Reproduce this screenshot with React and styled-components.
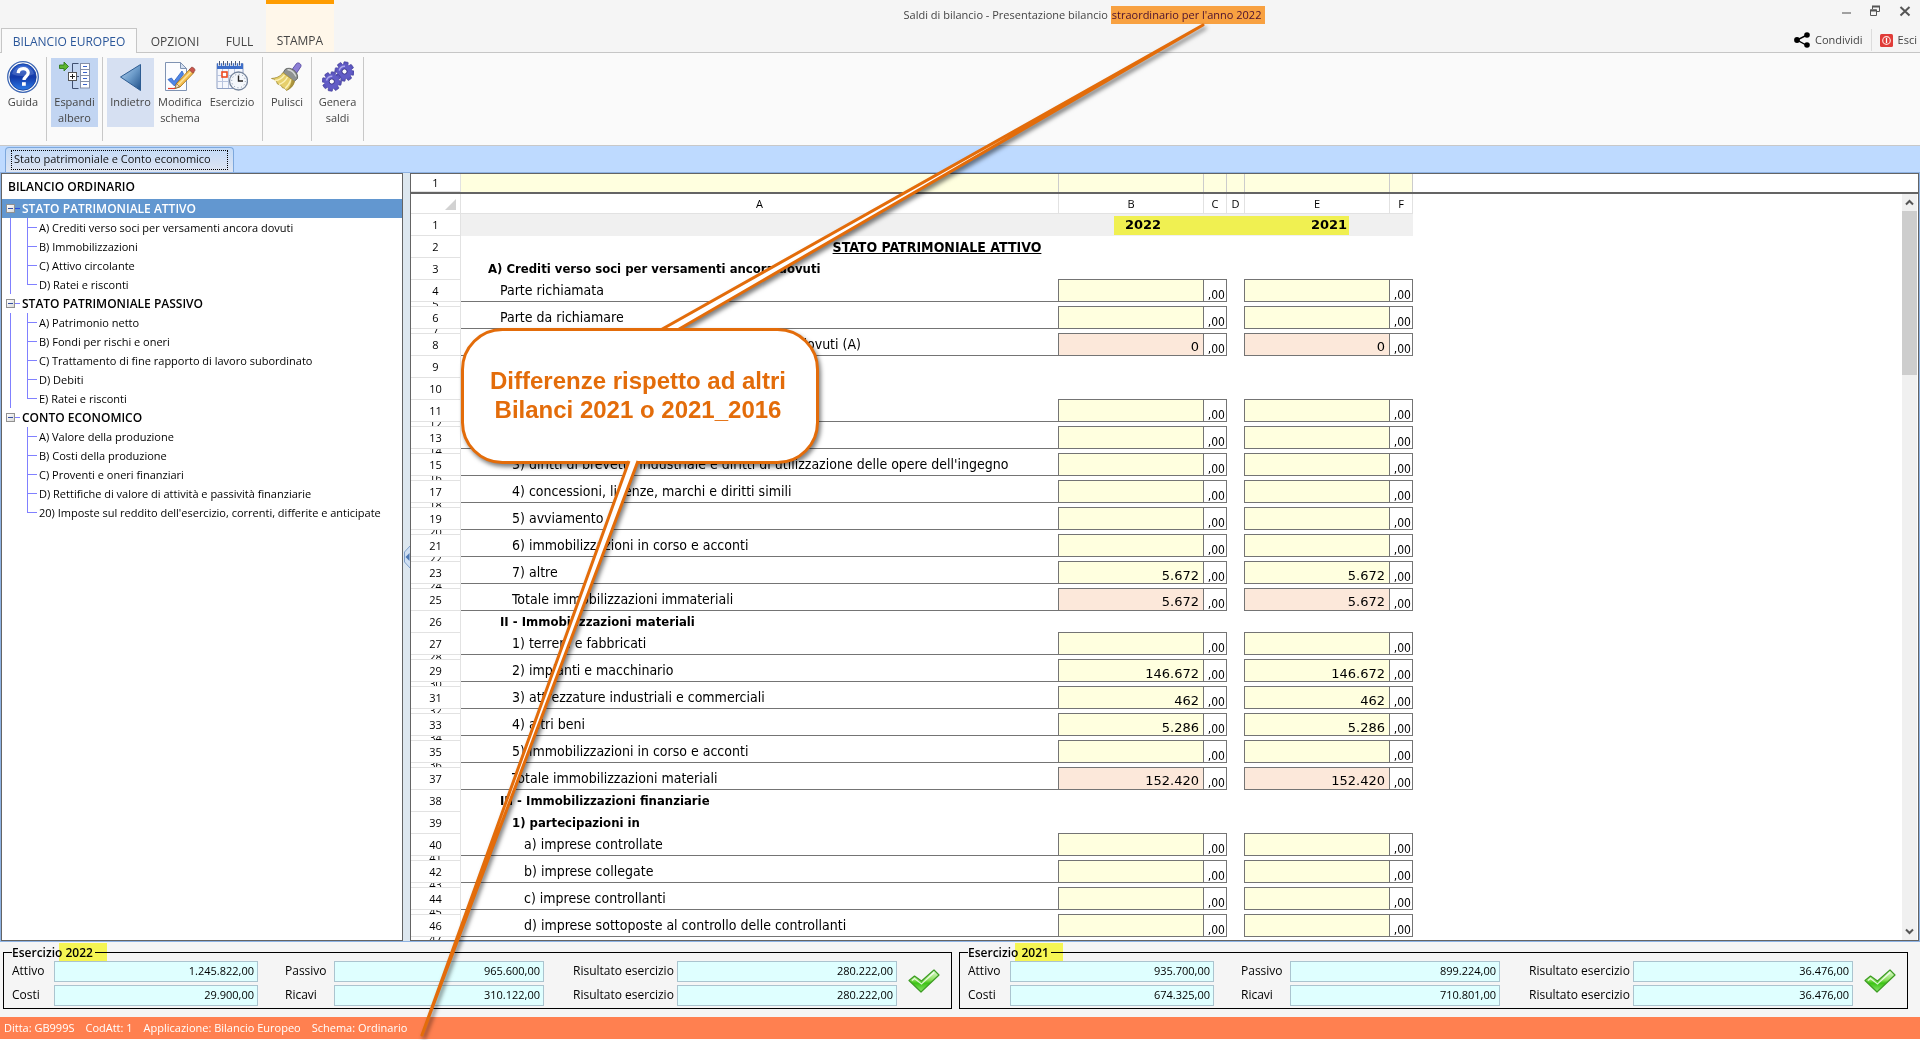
import React from "react";
import styled, { createGlobalStyle, css } from "styled-components";

const ui = '"Open Sans", "Noto Sans", sans-serif';
const sheet = '"DejaVu Sans Condensed", "DejaVu Sans", sans-serif';
const wide = '"DejaVu Sans", sans-serif';

const Global = createGlobalStyle`
  * { box-sizing: border-box; }
  body { margin: 0; background: #fff; font-family: ${ui}; font-size: 11px; line-height: 16px; color: #000; }
  button, input { font: inherit; color: inherit; }
  button { border: 0; background: none; padding: 0; margin: 0; cursor: pointer; }
  ul { list-style: none; margin: 0; padding: 0; }
`;

const Page = styled.div`
  position: relative;
  display: flex;
  flex-direction: column;
  height: 100vh;
  overflow: hidden;
  padding-bottom: 1px;
`;

/* ---------- window header ---------- */
const Header = styled.header`
  display: flex;
  height: 53px;
  flex: none;
  background: #f5f5f5;
  color: #444;
`;
const Tabs = styled.div`
  display: flex;
  align-items: flex-end;
  padding-left: 1px;
  box-shadow: inset 0 -1px #c6c6c6;
`;
const Tab = styled.button`
  font-size: 12px;
  height: 25px;
  width: ${(p) => p.$w}px;
  padding-top: 2px;
  white-space: nowrap;
  ${(p) => p.$active && css`
    background: #fafafa;
    border: 1px solid #c6c6c6;
    border-bottom: 0;
    color: #2b579a;
  `}
  ${(p) => p.$accent && css`
    height: 52px;
    padding-top: 25px;
    margin-bottom: 1px;
    background: #fff7ea;
    border-top: 4px solid #ff9c00;
  `}
`;
const HeaderBody = styled.div`
  flex: 1;
  display: flex;
  flex-direction: column;
  border-bottom: 1px solid #c6c6c6;
`;
const TitleRow = styled.div`
  display: flex;
  height: 28px;
`;
const Title = styled.h1`
  flex: 1;
  margin: 0;
  padding-top: 6px;
  font-size: 11px;
  font-weight: 400;
  line-height: 18px;
  text-align: center;
`;
const TitleMark = styled.mark`
  display: inline-block;
  padding: 0 4px 0 1px;
  background: #f8a141;
  color: #4a1030;
`;
const WindowButtons = styled.div`
  display: flex;
  gap: 18px;
  padding: 5px 9px 0 6px;
  align-items: flex-start;
`;
const IconButton = styled.button`
  display: flex;
`;
const Actions = styled.div`
  display: flex;
  justify-content: flex-end;
  align-items: center;
  height: 24px;
`;
const Action = styled.button`
  display: flex;
  align-items: center;
  gap: 5px;
  height: 22px;
  padding: 0 8px 0 0;
  & + & {
    border-left: 1px solid #dcdcdc;
    padding: 0 3px 0 8px;
  }
`;

/* ---------- ribbon ---------- */
const Ribbon = styled.div`
  display: flex;
  flex: none;
  height: 93px;
  padding-top: 4px;
  background: #fafafa;
  border-bottom: 1px solid #c8c8c8;
`;
const Group = styled.div`
  display: flex;
  height: 84px;
  padding: 1px 4px 0;
  border-right: 1px solid #c8c8c8;
`;
const Tool = styled.button`
  display: flex;
  flex-direction: column;
  align-items: center;
  gap: 1px;
  width: ${(p) => p.$w}px;
  height: 69px;
  padding-top: 3px;
  color: #444;
  background: ${(p) => p.$bg || "transparent"};
`;

/* ---------- document tabs ---------- */
const Strip = styled.div`
  display: flex;
  align-items: flex-end;
  flex: none;
  height: 27px;
  padding-left: 5px;
  background: #bedaff;
  border-bottom: 1px solid #8db2e3;
`;
const DocTab = styled.button`
  height: 25px;
  padding: 2px 5px 3px;
  border: 1px solid #7da8dd;
  border-bottom: 0;
  border-radius: 4px 4px 0 0;
  background: linear-gradient(#c3daf7, #dfe5f1);
  color: #111;
`;
const Focus = styled.span`
  display: block;
  padding: 0 16px 2px 2px;
  border: 1px dotted #000;
`;

/* ---------- work area ---------- */
const Main = styled.main`
  display: flex;
  flex: 1;
  min-height: 0;
  background: #dde7ef;
  border: solid #8db2e3;
  border-width: 0 1px 1px 1px;
`;
const TreePanel = styled.nav`
  width: 402px;
  flex: none;
  background: #fff;
  border: 1px solid #646464;
`;
const TreeTitle = styled.h2`
  margin: 0;
  padding: 0 6px;
  font-size: 12px;
  line-height: 25px;
  font-weight: 600;
`;
const line = "#8080ff";
const Node = styled.div`
  display: flex;
  align-items: center;
  height: 19px;
  padding-left: 4px;
  color: ${(p) => (p.$selected ? "#fff" : "#000")};
  background: ${(p) => (p.$selected ? "#6297d0" : "none")};
`;
const Toggle = styled.button`
  width: 9px;
  height: 9px;
  display: flex;
  align-items: center;
  justify-content: center;
  border: 1px solid #919191;
  background: linear-gradient(135deg, #fff, #d8d8d8);
  &::after {
    content: "";
    width: 5px;
    height: 1px;
    background: #3350a0;
  }
`;
const Dash = styled.span`
  width: 5px;
  height: 1px;
  margin-right: 2px;
  background: ${(p) => (p.$selected ? "#2a4fe0" : line)};
`;
const NodeName = styled.button`
  font-size: ${(p) => (p.$root ? 12 : 11)}px;
  font-weight: ${(p) => (p.$root ? 600 : 400)};
  line-height: 18px;
  white-space: nowrap;
`;
const Children = styled.ul`
  padding-left: 25px;
  background: ${(p) => (p.$last ? "none" : `linear-gradient(${line}, ${line}) 8px 0 / 1px 100% no-repeat`)};
`;
const Leaf = styled.li`
  display: flex;
  align-items: center;
  gap: 2px;
  height: 19px;
  &::before {
    content: "";
    width: 10px;
    height: 19px;
    background:
      linear-gradient(${line}, ${line}) 0 9px / 10px 1px no-repeat,
      linear-gradient(${line}, ${line}) 0 0 / 1px 100% no-repeat;
  }
  &:last-child::before {
    background:
      linear-gradient(${line}, ${line}) 0 9px / 10px 1px no-repeat,
      linear-gradient(${line}, ${line}) 0 0 / 1px 10px no-repeat;
  }
`;
const Splitter = styled.div`
  width: 7px;
  flex: none;
  display: flex;
  align-items: center;
`;

/* ---------- spreadsheet ---------- */
const SheetPanel = styled.section`
  display: flex;
  flex-direction: column;
  flex: 1;
  min-width: 0;
  background: #fff;
  border: 1px solid #646464;
`;
const Frozen = styled.div`
  flex: none;
  border-bottom: 2px solid #646464;
`;
const SheetBody = styled.div`
  display: flex;
  flex: 1;
  min-height: 0;
`;
const SheetScroll = styled.div`
  position: relative;
  flex: 1;
  overflow: hidden;
`;
const Table = styled.table`
  table-layout: fixed;
  width: 1002px;
  border-collapse: separate;
  border-spacing: 0;
`;
const RowHead = styled.th`
  height: ${(p) => p.$h}px;
  padding: 0;
  border-right: 1px solid #e2e2e2;
  border-bottom: 1px solid #e2e2e2;
  font-size: 11px;
  font-weight: 400;
  line-height: 14px;
`;
const Clip = styled.div`
  display: flex;
  align-items: center;
  justify-content: center;
  height: 4px;
  overflow: hidden;
  line-height: 14px;
`;
const ColHead = styled.th`
  height: 20px;
  padding: 0;
  border-right: 1px solid #e2e2e2;
  border-bottom: 1px solid #e2e2e2;
  font-size: 11px;
  font-weight: 400;
  line-height: 14px;
`;
const FrozenCell = styled.td`
  height: 18px;
  padding: 0;
  background: #ffffdf;
  border-right: 1px solid #ccc;
`;
const YearCell = styled.td`
  padding: 0;
  background: #f0f0f0;
  font: 700 13px/16px ${wide};
  text-align: center;
`;
const SheetTitle = styled.td`
  padding: 0;
  text-align: center;
  font: 700 14px/18px ${sheet};
  text-decoration: underline;
`;
const LabelCell = styled.td`
  padding: 0 0 ${(p) => (p.$bold ? 0 : 2)}px ${(p) => 27 + p.$level * 12}px;
  white-space: nowrap;
  font: ${(p) => (p.$bold ? "700 13px" : "400 14px")}/18px ${sheet};
  border-bottom: ${(p) => (p.$box ? "1px solid #747474" : 0)};
`;
const Cell = styled.td`
  padding: 0;
  font: 13px/16px ${wide};
  text-align: right;
  ${(p) => p.$box && css`
    background: ${p.$bg};
    border: solid #747474;
    border-width: 0 1px 1px 0;
    box-shadow: -1px -1px #747474, 0 -1px #747474, -1px 0 #747474;
  `}
`;
const Amount = styled.input`
  display: block;
  width: 100%;
  height: 21px;
  padding: 5px 4px 0 0;
  border: 0;
  background: none;
  text-align: right;
`;
const Total = styled.output`
  display: block;
  height: 21px;
  padding: 5px 4px 0 0;
`;
const Cents = styled.div`
  height: 21px;
  padding: 7px 1px 0 0;
  font: 12px/16px ${sheet};
`;
const Marker = styled.span`
  position: absolute;
  left: ${(p) => p.$x}px;
  top: ${(p) => p.$y}px;
  width: ${(p) => p.$w}px;
  height: ${(p) => p.$h}px;
  background: #ffff56;
  mix-blend-mode: multiply;
  pointer-events: none;
`;
const Scrollbar = styled.div`
  display: flex;
  flex-direction: column;
  width: 15px;
  margin-right: 1px;
  flex: none;
  background: #f0f0f0;
`;
const ScrollArrow = styled.button`
  display: flex;
  align-items: center;
  justify-content: center;
  height: 17px;
`;
const Thumb = styled.div`
  height: 164px;
  margin-bottom: auto;
  background: #cdcdcd;
`;

/* ---------- summary ---------- */
const Summary = styled.footer`
  display: flex;
  flex: none;
  gap: 7px;
  padding: 2px 12px 8px 3px;
  background: #f5f5f5;
`;
const Box = styled.fieldset`
  flex: 1;
  min-width: 0;
  margin: 0;
  padding: 0 11px 2px 8px;
  border: 1px solid #000;
`;
const Legend = styled.legend`
  position: relative;
  padding: 0 2px 0 0;
  font-size: 12px;
  font-weight: 600;
  line-height: 17px;
`;
const Fields = styled.div`
  display: grid;
  grid-template-columns: 42px 204fr 76px 210fr 133px 220fr 43px;
  grid-auto-rows: 21px;
  row-gap: 3px;
  align-items: center;
`;
const FieldLabel = styled.label`
  font-size: 12px;
  padding-left: ${(p) => p.$pad}px;
  padding-bottom: 2px;
  white-space: nowrap;
`;
const Field = styled.input`
  width: 100%;
  min-width: 0;
  height: 21px;
  padding: 0 3px 2px;
  border: 1px solid #abc4cf;
  background: #dfffff;
  text-align: right;
`;
const CheckSlot = styled.div`
  grid-column: 7;
  grid-row: 1 / span 2;
  justify-self: end;
  display: flex;
  padding-bottom: 6px;
`;
const Status = styled.div`
  display: flex;
  align-items: center;
  gap: 11px;
  flex: none;
  height: 22px;
  padding-left: 4px;
  background: #ff8050;
  color: #fff;
`;

/* ---------- callout ---------- */
const Callout = styled.aside`
  position: absolute;
  left: 0;
  top: 0;
  pointer-events: none;
`;
const Arrows = styled.svg`
  display: block;
  filter: drop-shadow(2px 3px 2px rgba(0, 0, 0, 0.5));
`;
const CalloutText = styled.p`
  position: absolute;
  left: 460px;
  top: 328px;
  width: 356px;
  height: 134px;
  margin: 0;
  display: flex;
  align-items: center;
  justify-content: center;
  text-align: center;
  font: 700 24px/29px "Liberation Sans", sans-serif;
  color: #e36c0a;
`;

/* ---------- icons ---------- */
const HelpIcon = () => (
  <svg width="32" height="32" viewBox="0 0 32 32">
    <defs>
      <linearGradient id="hg" x1="0" y1="0" x2="0" y2="1">
        <stop offset="0" stopColor="#2a5fd0" /><stop offset=".5" stopColor="#1238a8" /><stop offset="1" stopColor="#2c7be6" />
      </linearGradient>
    </defs>
    <circle cx="16" cy="16" r="15.3" fill="#fff" stroke="#3c66b4" strokeWidth="1.3" />
    <circle cx="16" cy="16" r="13.2" fill="url(#hg)" stroke="#123a94" strokeWidth=".8" />
    <path d="M5 13a11.5 11.5 0 0 1 22 0c-7 3-15 3-22 0z" fill="#fff" opacity=".16" />
    <path d="M11.2 12.2c.2-3 2.200-4.600 5-4.600 2.900 0 5 1.600 5 4.200 0 3.600-4.200 3.700-4.200 7.200" fill="none" stroke="#fff" strokeWidth="3.300" />
    <rect x="15" y="21.200" width="3.800" height="3.600" fill="#fff" />
  </svg>
);
const ExpandIcon = () => (
  <svg width="32" height="32" viewBox="0 0 32 32">
    <path d="M0.500 4h4.500V1l4.500 4.500-4.500 4.500V7.500H0.500z" fill="#5cb531" stroke="#2f7a1c" strokeWidth=".9" />
    <path d="M19.500 2.500h-6v9M13.500 19.500v8h6M18 15.500h2" fill="none" stroke="#3f4f70" />
    <rect x="9.500" y="11.500" width="8" height="8" fill="#fff" stroke="#555" />
    <path d="M11 15.500h5M13.500 13v5" stroke="#222" />
    {[2, 8, 14, 20].map((y) => (
      <g key={y}>
        <rect x="21.500" y={y + 0.5} width="9" height="6.500" fill="#fdfdff" stroke="#8690a8" />
        <path d={`M24 ${y + 3.5}h4`} stroke="#3b62c8" />
      </g>
    ))}
  </svg>
);
const BackIcon = () => (
  <svg width="32" height="32" viewBox="0 0 32 32">
    <defs>
      <linearGradient id="bg" x1="0" y1="0" x2="1" y2="1">
        <stop offset="0" stopColor="#b9d4ef" /><stop offset=".5" stopColor="#6d9cca" /><stop offset="1" stopColor="#1f4f88" />
      </linearGradient>
    </defs>
    <path d="M5.500 16L25.500 3.500v26z" fill="url(#bg)" stroke="#2d5c92" />
  </svg>
);
const EditIcon = () => (
  <svg width="32" height="32" viewBox="0 0 32 32">
    <path d="M1.500 1.500h15l6 6v22h-21z" fill="#fbfcff" stroke="#7f93b3" />
    <path d="M16.500 1.500v6h6z" fill="#d5e0f0" stroke="#7f93b3" />
    <path d="M4 18.500l3.500-1.500 2.500 3.500L18 10l1.500 3L10.500 25z" fill="#4f86e6" stroke="#2c5fc0" strokeWidth=".8" />
    <path d="M11 27.500l1.500-5L26 8l4 3.500L16 26z" fill="#f5bf4e" stroke="#a8741c" strokeWidth=".9" />
    <path d="M14 24L28 9.500" stroke="#fbe3a0" strokeWidth="1.400" />
    <path d="M25.200 8.800l2-2.300c1.300-1 4.500 1.500 3.600 3.300l-2 2.300z" fill="#c9564c" stroke="#8a3a34" strokeWidth=".7" />
    <path d="M11 27.500l1.500-5 3 3z" fill="#f2dcc0" stroke="#6b5430" strokeWidth=".6" />
    <path d="M4 27.500h7" stroke="#e33a2a" strokeWidth="1.200" />
  </svg>
);
const CalendarIcon = () => (
  <svg width="32" height="32" viewBox="0 0 32 32">
    <path d="M1 2.500h26v25H1z" fill="#f5f7fd" stroke="#8fa0c4" />
    <path d="M1 2.500h26V8H1z" fill="#3d6ec9" />
    <path d="M3.500 0v5M7.500 0v5M11.500 0v5M15.500 0v5M19.500 0v5M23.500 0v5" stroke="#fff" strokeWidth="2.500" />
    <path d="M3.500 0v4.500M7.500 0v4.500M11.500 0v4.500M15.500 0v4.500M19.500 0v4.500M23.500 0v4.500" stroke="#4a5876" />
    <path d="M1 14.500h26M1 20.500h26M6.500 8v19M12.500 8v19M18.500 8v19" stroke="#b9c5df" />
    <rect x="6" y="11" width="5" height="5" fill="#fff" stroke="#ee4a22" strokeWidth="1.600" />
    <circle cx="22.500" cy="20" r="9" fill="#f4f7fb" stroke="#76859c" strokeWidth="1.300" />
    <circle cx="22.500" cy="20" r="6.800" fill="none" stroke="#8190a8" strokeDasharray="1 2.560" />
    <path d="M22.500 14.500V20h4.500" fill="none" stroke="#222" strokeWidth="1.400" />
  </svg>
);
const BroomIcon = () => (
  <svg width="32" height="32" viewBox="0 0 32 32">
    <path d="M20 10l5.500-7.500c1.800-1.600 5.500 .6 4.300 3.200L25 13z" fill="#8d7fd6" stroke="#574aa0" strokeWidth=".9" />
    <path d="M14 8.500c5-4 14 2.500 12.500 9l-4.500 4L11.500 13z" fill="#8e9190" stroke="#5c605f" strokeWidth=".9" />
    <path d="M16.500 8.500c3.500 .5 7 3.500 8.500 7" fill="none" stroke="#d5d8d6" strokeWidth="1.300" />
    <path d="M12 11.500l11.500 9c-1 4.500-4 7-8 9-.8-2-2.500-2.500-4-2.700-1-2.500-3-3.300-5-3.800-1-3.500-3-5-6-5.500C5 17 9 16 12 11.500z" fill="#e6cf6c" stroke="#a08a34" strokeWidth=".8" />
    <path d="M13.500 14C11 17.500 7 19.500 3.500 19.500M16.500 16c-2 4-5.500 6.500-8.500 7.500M20 18.500c-1.500 4-3.500 7-6 9" fill="none" stroke="#fbf1b6" strokeWidth="1.400" />
    <path d="M15.500 29.500c4-2 7-4.500 8-9l-3-2c0 4.500-2 8-5 11z" fill="#8c7428" opacity=".65" />
  </svg>
);
const Gear = ({ x, y, r }) => (
  <g transform={`translate(${x} ${y})`}>
    {[0, 45, 90, 135, 180, 225, 270, 315].map((a) => (
      <rect key={a} x="-2.200" y={-r - 2.800} width="4.400" height="5" rx=".6" fill="#5b55bd" stroke="#3f3a94" strokeWidth=".6" transform={`rotate(${a + 10})`} />
    ))}
    <circle r={r - 1.800} fill="none" stroke="#625cc6" strokeWidth="5.200" />
    <circle r={r - 4.200} fill="none" stroke="#3a3588" strokeWidth=".9" />
    <path d={`M${-r + 1.5} -1a${r - 1} ${r - 1} 0 0 1 ${r - 1} ${-r + 2.5}`} fill="none" stroke="#aeaaee" strokeWidth="1.500" />
  </g>
);
const GearsIcon = () => (
  <svg width="32" height="32" viewBox="0 0 32 32">
    <Gear x={22.5} y={10.5} r={6.8} />
    <Gear x={9.8} y={20.5} r={6.8} />
  </svg>
);
const CheckIcon = () => (
  <svg width="32" height="24" viewBox="0 0 32 24">
    <defs>
      <linearGradient id="cg" x1="0" y1="0" x2="0" y2="1">
        <stop offset="0" stopColor="#e9fbdf" /><stop offset=".45" stopColor="#8be05c" /><stop offset=".6" stopColor="#3cc414" /><stop offset="1" stopColor="#8fe670" />
      </linearGradient>
    </defs>
    <path d="M1 11.500L6.500 7l7 5L26 1l5 5L13 23z" fill="url(#cg)" stroke="#3d9c24" strokeWidth="1.200" strokeLinejoin="round" />
    <path d="M4 11.500l2.500-2 7 5.500L26 3.500" fill="none" stroke="#fff" strokeWidth="1.200" opacity=".8" />
  </svg>
);
const MinimizeIcon = () => (
  <svg width="10" height="12"><path d="M1 8h9" stroke="#a0a0a0" strokeWidth="2" /></svg>
);
const RestoreIcon = () => (
  <svg width="12" height="12">
    <path d="M3.500 4V1.500h7v5H8" fill="none" stroke="#555" />
    <path d="M3 1.500h8M1 5.500h7" stroke="#555" strokeWidth="2" />
    <path d="M1.500 5h6v5.500h-6z" fill="none" stroke="#555" />
  </svg>
);
const CloseIcon = () => (
  <svg width="12" height="12"><path d="M1.500 2l9 8.500M10.500 2l-9 8.500" stroke="#555" strokeWidth="2" /></svg>
);
const ShareIcon = () => (
  <svg width="16" height="16">
    <path d="M13 3L3 8l10 5.500" fill="none" stroke="#000" strokeWidth="1.400" />
    <circle cx="13" cy="3" r="2.800" /><circle cx="3" cy="8" r="2.900" /><circle cx="13" cy="13" r="2.800" />
  </svg>
);
const ExitIcon = () => (
  <svg width="13" height="13">
    <rect width="13" height="13" rx="1.500" fill="#e03c38" />
    <circle cx="6.500" cy="6.500" r="3.800" fill="none" stroke="#ffe0dc" strokeWidth="1.200" />
    <path d="M6.500 4v5" stroke="#fff" strokeWidth="1.300" />
  </svg>
);
const CornerIcon = () => (
  <svg width="49" height="19" display="block"><path d="M45 5v11H34z" fill="#d2d2d2" /></svg>
);
const CollapseIcon = () => (
  <svg width="7" height="24">
    <path d="M7 1L1.500 7v10L7 23" fill="#cfdff2" stroke="#7f9fca" />
    <path d="M6.500 8v8L2.500 12z" fill="#4d78b4" />
  </svg>
);
const ArrowUp = () => (
  <svg width="9" height="7"><path d="M1 5.500l3.500-3.500L8 5.500" fill="none" stroke="#555" strokeWidth="2" /></svg>
);
const ArrowDown = () => (
  <svg width="9" height="7"><path d="M1 1.500L4.500 5 8 1.500" fill="none" stroke="#555" strokeWidth="2" /></svg>
);

/* ---------- data ---------- */
const tree = [
  { name: "STATO PATRIMONIALE ATTIVO", selected: true, items: ["A) Crediti verso soci per versamenti ancora dovuti", "B) Immobilizzazioni", "C) Attivo circolante", "D) Ratei e risconti"] },
  { name: "STATO PATRIMONIALE PASSIVO", items: ["A) Patrimonio netto", "B) Fondi per rischi e oneri", "C) Trattamento di fine rapporto di lavoro subordinato", "D) Debiti", "E) Ratei e risconti"] },
  { name: "CONTO ECONOMICO", items: ["A) Valore della produzione", "B) Costi della produzione", "C) Proventi e oneri finanziari", "D) Rettifiche di valore di attività e passività finanziarie", "20) Imposte sul reddito dell'esercizio, correnti, differite e anticipate"] },
];

const head = (n, label, level) => ({ n, kind: "head", label, level });
const val = (n, label, level, value = "") => ({ n, kind: "value", label, level, value });
const tot = (n, label, level, value) => ({ n, kind: "total", label, level, value });
const gap = (n) => ({ n, kind: "gap" });

const rows = [
  head(3, "A) Crediti verso soci per versamenti ancora dovuti", 0),
  val(4, "Parte richiamata", 1), gap(5),
  val(6, "Parte da richiamare", 1), gap(7),
  tot(8, "Totale crediti verso soci per versamenti ancora dovuti (A)", 1, "0"),
  head(9, "", 0),
  head(10, "", 1),
  val(11, "", 2), gap(12),
  val(13, "", 2), gap(14),
  val(15, "3) diritti di brevetto industriale e diritti di utilizzazione delle opere dell'ingegno", 2), gap(16),
  val(17, "4) concessioni, licenze, marchi e diritti simili", 2), gap(18),
  val(19, "5) avviamento", 2), gap(20),
  val(21, "6) immobilizzazioni in corso e acconti", 2), gap(22),
  val(23, "7) altre", 2, "5.672"), gap(24),
  tot(25, "Totale immobilizzazioni immateriali", 2, "5.672"),
  head(26, "II - Immobilizzazioni materiali", 1),
  val(27, "1) terreni e fabbricati", 2), gap(28),
  val(29, "2) impianti e macchinario", 2, "146.672"), gap(30),
  val(31, "3) attrezzature industriali e commerciali", 2, "462"), gap(32),
  val(33, "4) altri beni", 2, "5.286"), gap(34),
  val(35, "5) immobilizzazioni in corso e acconti", 2), gap(36),
  tot(37, "Totale immobilizzazioni materiali", 2, "152.420"),
  head(38, "III - Immobilizzazioni finanziarie", 1),
  head(39, "1) partecipazioni in", 2),
  val(40, "a) imprese controllate", 3), gap(41),
  val(42, "b) imprese collegate", 3), gap(43),
  val(44, "c) imprese controllanti", 3), gap(45),
  val(46, "d) imprese sottoposte al controllo delle controllanti", 3), gap(47),
];

const years = [
  { year: "2022", rows: [["Attivo", "1.245.822,00", "Passivo", "965.600,00", "280.222,00"], ["Costi", "29.900,00", "Ricavi", "310.122,00", "280.222,00"]] },
  { year: "2021", rows: [["Attivo", "935.700,00", "Passivo", "899.224,00", "36.476,00"], ["Costi", "674.325,00", "Ricavi", "710.801,00", "36.476,00"]] },
];

const fills = { value: "#ffffdf", total: "#fce8da" };

const Cols = () => (
  <colgroup>
    {[50, 598, 145, 23, 18, 145, 23].map((w, i) => <col key={i} width={w} />)}
  </colgroup>
);

function AmountPair({ row, year }) {
  const box = row.kind in fills;
  return (
    <>
      <Cell $box={box} $bg={fills[row.kind]}>
        {row.kind === "value" && <Amount aria-label={`Riga ${row.n}, ${year}`} defaultValue={row.value} />}
        {row.kind === "total" && <Total>{row.value}</Total>}
      </Cell>
      <Cell $box={box} $bg="#fff">{box && <Cents>,00</Cents>}</Cell>
    </>
  );
}

function SheetRow({ row }) {
  const isGap = row.kind === "gap";
  return (
    <tr>
      <RowHead scope="row" $h={isGap ? 5 : 22}>{isGap ? <Clip>{row.n}</Clip> : row.n}</RowHead>
      <LabelCell $box={row.kind in fills} $bold={row.kind === "head"} $level={row.level || 0}>{row.label}</LabelCell>
      <AmountPair row={row} year="2022" />
      <Cell />
      <AmountPair row={row} year="2021" />
    </tr>
  );
}

export default function App() {
  return (
    <Page>
      <Global />
      <Header>
        <Tabs role="tablist">
          <Tab role="tab" aria-selected="true" $w={136} $active>BILANCIO EUROPEO</Tab>
          <Tab role="tab" $w={76}>OPZIONI</Tab>
          <Tab role="tab" $w={53}>FULL</Tab>
          <Tab role="tab" $w={68} $accent>STAMPA</Tab>
        </Tabs>
        <HeaderBody>
          <TitleRow>
            <Title>Saldi di bilancio - Presentazione bilancio <TitleMark>straordinario per l'anno 2022</TitleMark></Title>
            <WindowButtons>
              <IconButton aria-label="Riduci a icona"><MinimizeIcon /></IconButton>
              <IconButton aria-label="Ripristina"><RestoreIcon /></IconButton>
              <IconButton aria-label="Chiudi"><CloseIcon /></IconButton>
            </WindowButtons>
          </TitleRow>
          <Actions>
            <Action><ShareIcon />Condividi</Action>
            <Action><ExitIcon />Esci</Action>
          </Actions>
        </HeaderBody>
      </Header>

      <Ribbon>
        <Group><Tool $w={38}><HelpIcon />Guida</Tool></Group>
        <Group><Tool $w={47} $bg="#c2d5f2"><ExpandIcon />Espandi albero</Tool></Group>
        <Group>
          <Tool $w={47} $bg="#d6e0f2"><BackIcon />Indietro</Tool>
          <Tool $w={52}><EditIcon />Modifica schema</Tool>
          <Tool $w={52}><CalendarIcon />Esercizio</Tool>
        </Group>
        <Group><Tool $w={40}><BroomIcon />Pulisci</Tool></Group>
        <Group><Tool $w={43}><GearsIcon />Genera saldi</Tool></Group>
      </Ribbon>

      <Strip role="tablist">
        <DocTab role="tab" aria-selected="true"><Focus>Stato patrimoniale e Conto economico</Focus></DocTab>
      </Strip>

      <Main>
        <TreePanel>
          <TreeTitle>BILANCIO ORDINARIO</TreeTitle>
          <ul>
            {tree.map((g, i) => (
              <li key={g.name}>
                <Node $selected={g.selected}>
                  <Toggle aria-label={`Comprimi ${g.name}`} />
                  <Dash $selected={g.selected} />
                  <NodeName $root>{g.name}</NodeName>
                </Node>
                <Children $last={i === tree.length - 1}>
                  {g.items.map((t) => <Leaf key={t}><NodeName>{t}</NodeName></Leaf>)}
                </Children>
              </li>
            ))}
          </ul>
        </TreePanel>
        <Splitter><IconButton aria-label="Nascondi albero"><CollapseIcon /></IconButton></Splitter>
        <SheetPanel>
          <Frozen>
            <Table>
              <Cols />
              <tbody>
                <tr>
                  <RowHead scope="row" $h={18}>1</RowHead>
                  {[0, 1, 2, 3, 4, 5].map((i) => <FrozenCell key={i} />)}
                </tr>
              </tbody>
            </Table>
          </Frozen>
          <SheetBody>
            <SheetScroll>
              <Table>
                <Cols />
                <thead>
                  <tr>
                    <RowHead $h={20} aria-label="Seleziona tutto"><CornerIcon /></RowHead>
                    {["A", "B", "C", "D", "E", "F"].map((c) => <ColHead key={c} scope="col">{c}</ColHead>)}
                  </tr>
                </thead>
                <tbody>
                  <tr>
                    <RowHead scope="row" $h={22}>1</RowHead>
                    <YearCell />
                    <YearCell colSpan={2}>2022</YearCell>
                    <YearCell />
                    <YearCell colSpan={2}>2021</YearCell>
                  </tr>
                  <tr>
                    <RowHead scope="row" $h={22}>2</RowHead>
                    <SheetTitle colSpan={6}>STATO PATRIMONIALE ATTIVO</SheetTitle>
                  </tr>
                  {rows.map((r) => <SheetRow key={r.n} row={r} />)}
                </tbody>
              </Table>
              <Marker $x={703} $y={22} $w={235} $h={19} />
            </SheetScroll>
            <Scrollbar>
              <ScrollArrow aria-label="Scorri su"><ArrowUp /></ScrollArrow>
              <Thumb />
              <ScrollArrow aria-label="Scorri giù"><ArrowDown /></ScrollArrow>
            </Scrollbar>
          </SheetBody>
        </SheetPanel>
      </Main>

      <Summary>
        {years.map(({ year, rows: lines }) => (
          <Box key={year}>
            <Legend>Esercizio {year}<Marker $x={47} $y={-1} $w={48} $h={18} /></Legend>
            <Fields>
              {lines.map(([a, av, b, bv, res], i) => (
                <React.Fragment key={a}>
                  <FieldLabel htmlFor={`a${year}${i}`} $pad={0}>{a}</FieldLabel>
                  <Field id={`a${year}${i}`} readOnly value={av} />
                  <FieldLabel htmlFor={`b${year}${i}`} $pad={27}>{b}</FieldLabel>
                  <Field id={`b${year}${i}`} readOnly value={bv} />
                  <FieldLabel htmlFor={`r${year}${i}`} $pad={29}>Risultato esercizio</FieldLabel>
                  <Field id={`r${year}${i}`} readOnly value={res} />
                </React.Fragment>
              ))}
              <CheckSlot><CheckIcon /></CheckSlot>
            </Fields>
          </Box>
        ))}
      </Summary>
      <Status>
        <span>Ditta: GB999S</span>
        <span>CodAtt: 1</span>
        <span>Applicazione: Bilancio Europeo</span>
        <span>Schema: Ordinario</span>
      </Status>

      <Callout>
        <Arrows width="1300" height="1040">
          <g fill="#fff" stroke="#e36c0a" strokeWidth="3" strokeLinejoin="round">
            <path d="M657 332L1203 25L674 332z" />
            <rect x="462.500" y="329.500" width="355" height="133" rx="40" />
            <path d="M629 461L422 1035L638 461" />
          </g>
        </Arrows>
        <CalloutText>Differenze rispetto ad altri<br />Bilanci 2021 o 2021_2016</CalloutText>
      </Callout>
    </Page>
  );
}
